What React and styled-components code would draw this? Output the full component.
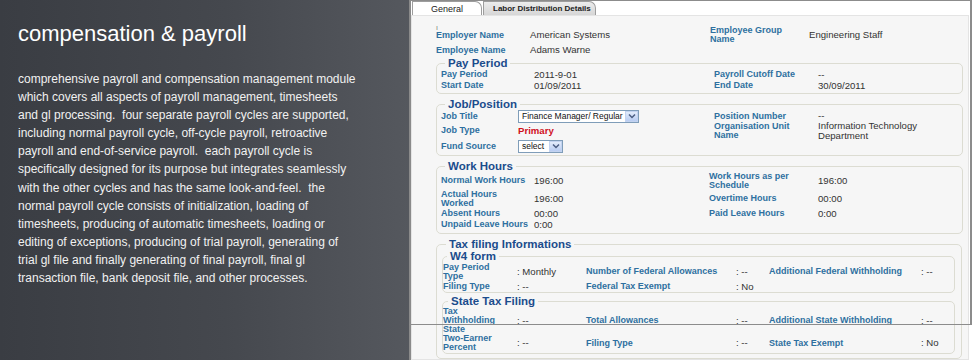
import React from "react";
import styled, { createGlobalStyle } from "styled-components";

const GlobalStyle = createGlobalStyle`
  html, body {
    margin: 0;
    padding: 0;
    background: #fff;
  }
  * {
    box-sizing: border-box;
  }
`;

const intro = [
  "comprehensive payroll and compensation management module",
  "which covers all aspects of payroll management, timesheets",
  "and gl processing.  four separate payroll cycles are supported,",
  "including normal payroll cycle, off-cycle payroll, retroactive",
  "payroll and end-of-service payroll.  each payroll cycle is",
  "specifically designed for its purpose but integrates seamlessly",
  "with the other cycles and has the same look-and-feel.  the",
  "normal payroll cycle consists of initialization, loading of",
  "timesheets, producing of automatic timesheets, loading or",
  "editing of exceptions, producing of trial payroll, generating of",
  "trial gl file and finally generating of final payroll, final gl",
  "transaction file, bank deposit file, and other processes.",
];

const Page = styled.div`
  display: flex;
  width: 972px;
  height: 360px;
  overflow: hidden;
  font-family: "Liberation Sans", Arial, sans-serif;
`;

const Intro = styled.section`
  width: 409px;
  flex: none;
  padding: 21px 18px 0;
  background: linear-gradient(90deg, #3a3d43 0%, #45484e 55%, #55585e 100%);
  color: #fff;
`;

const Title = styled.h1`
  margin: 0;
  font-size: 22px;
  line-height: 26px;
  font-weight: 400;
  color: #fff;
`;

const Body = styled.p`
  margin: 23px 0 0;
  font-size: 12px;
  line-height: 18.1px;
  white-space: pre;
  color: #f1f1f1;
`;

const Shot = styled.section`
  position: relative;
  flex: 1;
  display: flex;
  flex-direction: column;
  background: #fff;
  border-left: 2px solid #8a8a8a;
  font-size: 9px;
  color: #333;
`;

const FrameEdge = styled.div`
  position: absolute;
  top: 0;
  left: -2px;
  right: 0;
  height: 325px;
  border-top: 1px solid #8c8c8c;
  border-right: 2px solid #8c8c8c;
  border-bottom: 1px solid #8c8c8c;
  pointer-events: none;
`;

const TabStrip = styled.div`
  display: flex;
  align-items: flex-end;
  height: 15px;
  padding: 1px 0 0 1px;
  flex: none;
`;

const Tab = styled.div`
  height: 14px;
  width: ${(p) => p.$w}px;
  padding-left: ${(p) => p.$pad}px;
  margin-right: 1px;
  display: flex;
  align-items: center;
  font-size: ${(p) => (p.$active ? 9 : 8)}px;
  font-weight: ${(p) => (p.$active ? 400 : 700)};
  color: #222;
  border: 1px solid #9d9d9d;
  border-bottom: none;
  border-radius: 0 7px 0 0;
  background: ${(p) =>
    p.$active ? "#fff" : "linear-gradient(#ececec, #d6d6d6)"};
  white-space: nowrap;
`;

const Content = styled.div`
  flex: 1;
  background: #f6f6f6;
  border: 1px solid #e4e4e4;
  margin-right: 3px;
  padding: 4px 4px 0 24px;
`;

const Tick = styled.div`
  height: 6px;
  font-size: 7px;
  line-height: 15px;
  color: #777;
`;

const Grid = styled.div`
  display: grid;
  grid-template-columns: ${(p) => p.$cols};
  grid-template-rows: ${(p) => p.$rows};
  padding: ${(p) => p.$pad || "0"};
  align-items: center;
`;

const Label = styled.div`
  font-weight: 700;
  color: #2e70a0;
  line-height: 9px;
  white-space: nowrap;
  padding-top: ${(p) => p.$drop || 0}px;
`;

const Value = styled.div`
  font-size: 9.6px;
  color: ${(p) => (p.$red ? "#d0101c" : "#333")};
  font-weight: ${(p) => (p.$red ? 700 : 400)};
  line-height: 9.5px;
  white-space: nowrap;
  padding-top: ${(p) => p.$drop || 0}px;
`;

const Box = styled.fieldset`
  margin: ${(p) => p.$mt || 0}px 0 0;
  padding: 0 ${(p) => p.$pr || 0}px ${(p) => p.$pb || 0}px ${(p) => p.$pl || 0}px;
  border: 1px solid #dcdcd2;
  border-radius: 5px;
  min-width: 0;
  width: ${(p) => p.$w}px;
`;

const Legend = styled.legend`
  margin-left: ${(p) => p.$ml}px;
  padding: 0 3px;
  font-size: 11.5px;
  line-height: ${(p) => p.$lh || 12}px;
  font-weight: 700;
  color: #1b4c8c;
`;

const Select = styled.div`
  display: flex;
  align-items: center;
  justify-content: space-between;
  width: ${(p) => p.$w}px;
  height: 13px;
  padding-left: 3px;
  border: 1px solid #7f9db9;
  background: #fff;
  font-size: 8.5px;
  color: #111;
`;

const Arrow = styled.span`
  display: flex;
  align-items: center;
  justify-content: center;
  width: 13px;
  height: 11px;
  background: linear-gradient(#e3ecfb, #b9cdf2);
  border: 1px solid #c3d3f0;
`;

const Chevron = () => (
  <svg width="8" height="6" viewBox="0 0 8 6">
    <path d="M1 1.5 L4 4.5 L7 1.5" fill="none" stroke="#4d5f83" strokeWidth="1.5" />
  </svg>
);

const Dropdown = ({ w, children }) => (
  <Select $w={w}>
    {children}
    <Arrow>
      <Chevron />
    </Arrow>
  </Select>
);

const TAX_COLS = "74px 69px 150px 33px 152px 1fr";

export default function App() {
  return (
    <>
      <GlobalStyle />
      <Page>
        <Intro>
          <Title>compensation &amp; payroll</Title>
          <Body>{intro.join("\n")}</Body>
        </Intro>

        <Shot>
          <TabStrip>
            <Tab $active $w={70} $pad={18}>General</Tab>
            <Tab $w={113} $pad={9}>Labor Distribution Details</Tab>
          </TabStrip>

          <Content>
            <Tick>ı</Tick>
            <Grid $cols="94px 180px 99px 1fr" $rows="18px 12px">
              <Label>Employer Name</Label>
              <Value>American Systems</Value>
              <Label>Employee Group<br />Name</Label>
              <Value>Engineering Staff</Value>
              <Label>Employee Name</Label>
              <Value>Adams Warne</Value>
            </Grid>

            <Box $mt={1} $w={527} $pb={2}>
              <Legend $ml={8}>Pay Period</Legend>
              <Grid $cols="93px 180px 104px 1fr" $rows="11px 11px" $pad="0 0 0 4px">
                <Label>Pay Period</Label>
                <Value>2011-9-01</Value>
                <Label>Payroll Cutoff Date</Label>
                <Value>--</Value>
                <Label>Start Date</Label>
                <Value>01/09/2011</Value>
                <Label>End Date</Label>
                <Value>30/09/2011</Value>
              </Grid>
            </Box>

            <Box $mt={4} $w={527} $pb={2}>
              <Legend $ml={8}>Job/Position</Legend>
              <Grid $cols="77px 196px 104px 1fr" $rows="12px 17px 14px" $pad="0 0 0 4px">
                <Label>Job Title</Label>
                <Dropdown w={121}>Finance Manager/ Regular</Dropdown>
                <Label>Position Number</Label>
                <Value>--</Value>
                <Label>Job Type</Label>
                <Value $red>Primary</Value>
                <Label>Organisation Unit<br />Name</Label>
                <Value>Information Technology<br />Department</Value>
                <Label>Fund Source</Label>
                <Dropdown w={45}>select</Dropdown>
              </Grid>
            </Box>

            <Box $mt={4} $w={527} $pb={3}>
              <Legend $ml={8}>Work Hours</Legend>
              <Grid $cols="93px 175px 109px 1fr" $rows="17px 19px 11px 11px" $pad="0 0 0 4px">
                <Label>Normal Work Hours</Label>
                <Value>196:00</Value>
                <Label>Work Hours as per<br />Schedule</Label>
                <Value>196:00</Value>
                <Label>Actual Hours<br />Worked</Label>
                <Value>196:00</Value>
                <Label>Overtime Hours</Label>
                <Value>00:00</Value>
                <Label>Absent Hours</Label>
                <Value>00:00</Value>
                <Label>Paid Leave Hours</Label>
                <Value>0:00</Value>
                <Label>Unpaid Leave Hours</Label>
                <Value>0:00</Value>
              </Grid>
            </Box>

            <Box $mt={4} $w={526} $pl={5} $pr={6} $pb={4}>
              <Legend $ml={4}>Tax filing Informations</Legend>
              <Box $mt={1} $w={513} $pb={0}>
                <Legend $ml={4} $lh={11}>W4 form</Legend>
                <Grid $cols={TAX_COLS} $rows="19px 11px">
                  <Label>Pay Period<br />Type</Label>
                  <Value>: Monthly</Value>
                  <Label>Number of Federal Allowances</Label>
                  <Value>: --</Value>
                  <Label>Additional Federal Withholding</Label>
                  <Value>: --</Value>
                  <Label>Filing Type</Label>
                  <Value>: --</Value>
                  <Label>Federal Tax Exempt</Label>
                  <Value>: No</Value>
                </Grid>
              </Box>
              <Box $mt={3} $w={513} $pb={1}>
                <Legend $ml={5} $lh={11}>State Tax Filing</Legend>
                <Grid $cols={TAX_COLS} $rows="18px 27px">
                  <Label>Tax<br />Withholding</Label>
                  <Value $drop={9}>: --</Value>
                  <Label $drop={9}>Total Allowances</Label>
                  <Value $drop={9}>: --</Value>
                  <Label $drop={9}>Additional State Withholding</Label>
                  <Value $drop={9}>: --</Value>
                  <Label>State<br />Two-Earner<br />Percent</Label>
                  <Value $drop={9}>: --</Value>
                  <Label $drop={9}>Filing Type</Label>
                  <Value $drop={9}>: --</Value>
                  <Label $drop={9}>State Tax Exempt</Label>
                  <Value $drop={9}>: No</Value>
                </Grid>
              </Box>
            </Box>
          </Content>

          <FrameEdge />
        </Shot>
      </Page>
    </>
  );
}
